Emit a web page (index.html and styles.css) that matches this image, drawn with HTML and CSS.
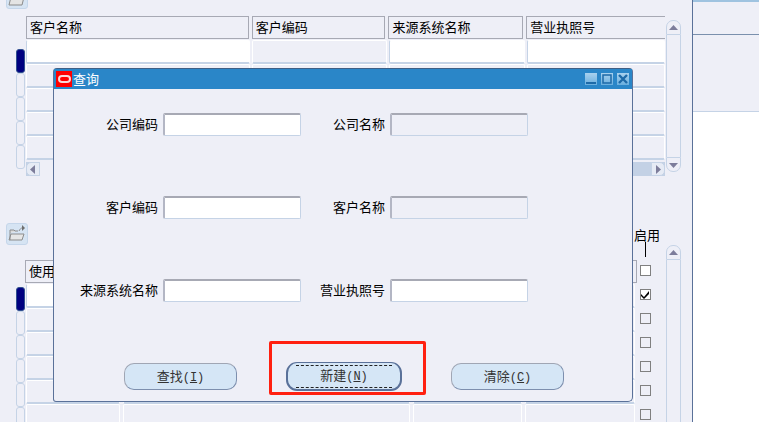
FILE: index.html
```html
<!DOCTYPE html>
<html lang="zh">
<head>
<meta charset="utf-8">
<title>查询</title>
<link rel="stylesheet" href="styles.css">
</head>
<body>
<div class="page">
  <main class="work">
    <button class="tool tool-top" aria-label="打开"><svg width="20" height="20" viewBox="0 0 20 20"><path d="M3 8V5h4l1 1h5v2" fill="#d9d9d9" stroke="#8a8a8a"/><path d="M2 17l2-8h13l-2 8z" fill="#e4e4e4" stroke="#8a8a8a"/></svg></button>
    <section class="upper">
      <div class="marks">
        <i class="mark on"></i><i class="mark"></i><i class="mark"></i><i class="mark"></i><i class="mark"></i>
      </div>
      <div class="table">
        <div class="row head">
          <div class="hc w1">客户名称</div><div class="hc w2">客户编码</div><div class="hc w3">来源系统名称</div><div class="hc w4 open">营业执照号</div>
        </div>
        <div class="row"><div class="c w1 white"></div><div class="c w2"></div><div class="c w3 white"></div><div class="c w4 white"></div></div>
        <div class="row"><div class="c w1"></div><div class="c w2"></div><div class="c w3"></div><div class="c w4"></div></div>
        <div class="row"><div class="c w1"></div><div class="c w2"></div><div class="c w3"></div><div class="c w4"></div></div>
        <div class="row"><div class="c w1"></div><div class="c w2"></div><div class="c w3"></div><div class="c w4"></div></div>
        <div class="row"><div class="c w1"></div><div class="c w2"></div><div class="c w3"></div><div class="c w4"></div></div>
        <div class="hbar">
          <span class="hbtn"><svg width="6" height="9" viewBox="0 0 6 9"><path d="M5 0v9L0 4.500z" fill="#7d7d9b"/></svg></span>
          <span class="thumb"></span>
          <span class="track"></span>
          <span class="hbtn end"><svg width="6" height="9" viewBox="0 0 6 9"><path d="M1 0v9l5-4.500z" fill="#7d7d9b"/></svg></span>
        </div>
      </div>
      <div class="vbar upper-v">
        <span class="vbtn up"><svg width="9" height="6" viewBox="0 0 9 6"><path d="M0 5h9L4.500 0z" fill="#7d7d9b"/></svg></span>
        <span class="vtrack"></span>
        <span class="vbtn down"><svg width="9" height="6" viewBox="0 0 9 6"><path d="M0 1h9L4.500 6z" fill="#7d7d9b"/></svg></span>
      </div>
    </section>

    <section class="lower">
      <div class="side">
        <button class="tool" aria-label="打开"><svg width="20" height="20" viewBox="0 0 20 20"><path d="M3 9V6h4l1 1h3" fill="#dcdcdc" stroke="#8c8c8c"/><path d="M2 16l2-6h13l-2 6z" fill="#e6e6e6" stroke="#8c8c8c"/><path d="M3 16V9M12 7c1-2 2-3 3-3" fill="none" stroke="#8c8c8c"/><path d="M15 1l3 3-3 3z" fill="#6f6f6f"/></svg></button>
        <div class="marks lower-marks">
          <i class="mark on"></i><i class="mark"></i><i class="mark"></i><i class="mark"></i><i class="mark"></i><i class="mark"></i>
        </div>
      </div>
      <div class="table low">
        <div class="row head"><div class="hc full">使用</div></div>
        <div class="row"><div class="c v1 white"></div><div class="c v2"></div><div class="c v3"></div><div class="c v4"></div></div>
        <div class="row"><div class="c v1"></div><div class="c v2"></div><div class="c v3"></div><div class="c v4"></div></div>
        <div class="row"><div class="c v1"></div><div class="c v2"></div><div class="c v3"></div><div class="c v4"></div></div>
        <div class="row"><div class="c v1"></div><div class="c v2"></div><div class="c v3"></div><div class="c v4"></div></div>
        <div class="row"><div class="c v1"></div><div class="c v2"></div><div class="c v3"></div><div class="c v4"></div></div>
        <div class="row"><div class="c v1"></div><div class="c v2"></div><div class="c v3"></div><div class="c v4"></div></div>
      </div>
      <div class="checks">
        <div class="check-label">启用</div>
        <div class="tick"></div>
        <i class="box first"></i>
        <i class="box checked"><svg width="9" height="8" viewBox="0 0 9 8"><path d="M0 3l3 3 5-6v3L3 8 0 5z" fill="#000"/></svg></i>
        <i class="box"></i><i class="box"></i><i class="box"></i><i class="box"></i><i class="box"></i>
      </div>
      <div class="vbar lower-v">
        <span class="vbtn up"><svg width="9" height="6" viewBox="0 0 9 6"><path d="M0 5h9L4.500 0z" fill="#7d7d9b"/></svg></span>
        <span class="vtrack"></span>
      </div>
    </section>
  </main>

  <aside class="panel">
    <div class="strip"></div>
    <div class="panel-a"></div>
    <div class="panel-b"></div>
    <div class="panel-c"></div>
  </aside>

  <div class="dialog" role="dialog">
    <header class="title">
      <span class="logo"><i></i></span>
      <span class="title-text">查询</span>
      <span class="win-btns">
        <span class="win"><svg width="12" height="12" viewBox="0 0 12 12"><rect x="1" y="9" width="10" height="2" fill="#1d6aa8"/></svg></span>
        <span class="win"><svg width="12" height="12" viewBox="0 0 12 12"><rect x="2" y="2" width="8" height="8" fill="none" stroke="#1d6aa8" stroke-width="1.500"/></svg></span>
        <span class="win"><svg width="12" height="12" viewBox="0 0 12 12"><path d="M2 2l8 8M10 2l-8 8" stroke="#1d6aa8" stroke-width="2.400"/></svg></span>
      </span>
    </header>
    <div class="form">
      <label class="lb">公司编码</label><div class="field"></div><label class="lb">公司名称</label><div class="field off"></div>
      <label class="lb">客户编码</label><div class="field"></div><label class="lb">客户名称</label><div class="field off"></div>
      <label class="lb">来源系统名称</label><div class="field"></div><label class="lb">营业执照号</label><div class="field"></div>
    </div>
    <div class="actions">
      <button class="btn">查找<span class="key">(<u>I</u>)</span></button>
      <button class="btn focus">新建<span class="key">(<u>N</u>)</span></button>
      <button class="btn">清除<span class="key">(<u>C</u>)</span></button>
    </div>
  </div>

  <div class="redbox"></div>
</div>
</body>
</html>
```
FILE: styles.css
```css
* { box-sizing: border-box; }
html, body { margin: 0; padding: 0; }
body { background: #eeeff7; font-family: "Noto Sans CJK SC", "Liberation Sans", sans-serif; font-size: 13px; color: #000; }
i { display: block; }

.page { position: relative; display: flex; width: 759px; height: 422px; overflow: hidden; background: #eeeff7; }
.work { width: 692px; flex: none; }

.tool { display: flex; align-items: center; justify-content: center; width: 22px; height: 22px; padding: 0; background: #d6e4f3; border: 1px solid #c5d6ea; border-radius: 3px; }
.tool-top { margin: -13px 0 0 6px; }

.upper { display: flex; margin: 7px 0 0 16px; height: 160px; }
.marks { width: 9px; flex: none; padding-top: 33px; }
.mark { width: 9px; height: 24px; border: 1px solid #c5d3e6; border-radius: 3px; }
.mark.on { background: #000080; border-color: #2f4f8f; }

.table { width: 639px; flex: none; margin-left: 1px; }
.row { display: flex; gap: 2px; height: 24px; }
.head { height: 24px; gap: 3px; }
.hc { height: 23px; padding-left: 3px; border: 1px solid #a7a9b4; line-height: 20px; white-space: nowrap; overflow: hidden; }
.open { border-right: 0; }
.w1 { width: 223px; }
.w2 { width: 134px; }
.w3 { width: 135px; }
.w4 { width: 139px; }
.upper .c.w1 { width: 224px; }
.upper .c.w2 { width: 135px; }
.upper .c.w3 { width: 136px; }
.upper .c.w4 { width: 138px; }
.c { height: 24px; border: 1px solid #fff; border-bottom: 2px solid #c5d3e6; border-radius: 2px; background: #eeeff7; }
.c.white { background: #fff; border-color: #fff #fff #c5d3e6 #c5d3e6; }

.hbar { display: flex; height: 14px; margin-top: 2px; background: #c3d1e5; }
.hbtn { display: flex; align-items: center; justify-content: center; width: 14px; background: #e6ebf5; border-radius: 5px 0 0 5px; border: 1px solid #c5d3e6; }
.hbtn.end { border-radius: 0 5px 5px 0; }
.thumb { width: 100px; background: #eeeff7; }
.track { flex: 1; }

.vbar { display: flex; flex-direction: column; width: 15px; flex: none; margin-left: 1px; }
.upper-v { height: 152px; margin-top: 4px; }
.vbtn { display: flex; align-items: center; justify-content: center; height: 15px; border: 1px solid #c5d3e6; }
.vbtn.up { border-radius: 7px 7px 0 0; }
.vbtn.down { border-radius: 0 0 7px 7px; }
.vtrack { flex: 1; border: 1px solid #c5d3e6; border-width: 0 1px; }

.lower { display: flex; margin: 47px 0 0 6px; height: 210px; }
.side { width: 18px; flex: none; }
.lower-marks { margin-left: 10px; padding-top: 42px; }
.table.low { width: 612px; margin: 37px 0 0 1px; }
.full { width: 612px; }
.low .row { gap: 3px; }
.low .row:not(.head) { padding-left: 1px; }
.v1 { width: 94px; }
.v2 { width: 287px; }
.v3 { width: 109px; }
.v4 { width: 110px; }

.checks { width: 16px; flex: none; display: flex; flex-direction: column; align-items: center; padding-top: 5px; }
.check-label { height: 14px; line-height: 14px; white-space: nowrap; width: 26px; flex: none; padding-left: 2px; text-align: center; }
.tick { width: 1px; height: 15px; margin: 0 0 8px; background: #000; }
.box { display: flex; align-items: center; justify-content: center; width: 11px; height: 11px; margin-bottom: 13px; background: #eeeff7; border: 1px solid #808080; }
.box.first { background: #fff; margin-left: 1px; }
.box.checked { background: #fff; }

.vbar.lower-v { height: 190px; margin: 22px 0 0 13px; }

.panel { flex: 1; display: flex; flex-direction: column; border-left: 1px solid #5a7199; height: 422px; }
.strip { height: 2px; background: #9fc3e0; }
.panel-a { height: 33px; border-bottom: 1px solid #7a90ad; }
.panel-b { height: 77px; border-bottom: 1px solid #c5d3e6; }
.panel-c { flex: 1; background: #fff; }

.dialog { position: absolute; left: 53px; top: 68px; width: 580px; height: 334px; display: flex; flex-direction: column; background: #eeeff7; border: 1px solid #5a7199; border-top-color: #3f5f85; border-radius: 4px 4px 5px 3px; }
.title { display: flex; align-items: center; height: 20px; flex: none; background: #2a86c8; padding-left: 2px; }
.logo { display: flex; align-items: center; justify-content: center; width: 16px; height: 16px; background: #ff0000; }
.logo i { width: 13px; height: 8px; border: 2px solid #f8d8d8; border-radius: 4px; }
.title-text { color: #fff; line-height: 20px; margin-left: 1px; }
.win-btns { display: flex; gap: 4px; margin-left: auto; margin-right: 3px; }
.win { display: block; width: 12px; height: 12px; background: linear-gradient(#a9d1ee, #68aede); }
.win svg { display: block; }

.form { display: grid; grid-template-columns: 109px 138px 89px 138px; grid-auto-rows: 23px; row-gap: 60px; padding-top: 24px; }
.lb { text-align: right; padding-right: 5px; line-height: 22px; white-space: nowrap; }
.field { height: 23px; background: #fff; border: 1px solid #c5d3e6; border-top: 2px solid #a7a9b4; border-left: 2px solid #b3b6c4; border-radius: 2px; }
.field.off { background: #eeeff7; }

.actions { display: flex; align-items: center; gap: 49px; margin-top: 60px; padding-left: 70px; }
.btn { width: 113px; height: 27px; padding: 0 0 3px; background: #d5e6f6; border: 1px solid #a0a6b4; border-right-color: #7d8fae; border-bottom-color: #7d8fae; border-radius: 10px; font: inherit; color: #333; }
.key { font-family: "Liberation Mono", monospace; font-size: 12px; }
.btn.focus { position: relative; width: 116px; height: 29px; border: 1px solid #5a7199; border-width: 1px 2px 2px 2px; border-radius: 11px; }
.btn.focus::before { content: ""; position: absolute; left: 8px; right: 8px; top: 2px; bottom: 1px; border: dashed #222; border-width: 1px 0; }

.redbox { position: absolute; left: 269px; top: 341px; width: 157px; height: 54px; border: 3px solid #ff2010; border-radius: 2px; }
```
